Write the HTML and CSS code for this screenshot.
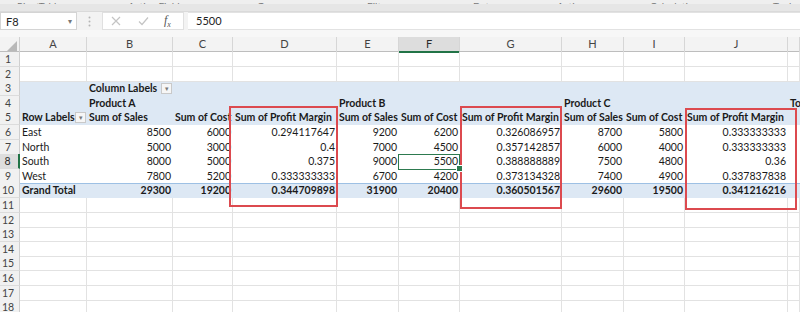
FILE: index.html
```html
<!DOCTYPE html>
<html lang="en">
<head>
    <meta charset="UTF-8">
    <title>PivotTable - Profit Margin</title>
    <link rel="stylesheet" href="styles.css">
</head>
<body>
    <div class="ribbon-foot">
        <span>PivotTable</span>
        <span>Active Field</span>
        <span>Group</span>
        <span>Filter</span>
        <span>Data</span>
        <span>Actions</span>
        <span>Calculations</span>
        <span>Tools</span>
    </div>
    <div class="ribbon-edge"></div>

    <div class="fbar">
        <div class="namebox">
            <span>F8</span>
            <span class="nb-arrow">&#9662;</span>
        </div>
        <div class="fsep">
            <svg width="3" height="11" viewBox="0 0 3 11"><circle cx="1.5" cy="1.5" r="1" fill="#b5b5b5"/><circle cx="1.5" cy="5.5" r="1" fill="#b5b5b5"/><circle cx="1.5" cy="9.5" r="1" fill="#b5b5b5"/></svg>
        </div>
        <div class="fbtns">
            <svg class="ic" width="10" height="10" viewBox="0 0 10 10"><path d="M1 1 L9 9 M9 1 L1 9" stroke="#c4c4c4" stroke-width="1.2" fill="none"/></svg>
            <svg class="ic" width="11" height="10" viewBox="0 0 11 10"><path d="M1 5.5 L4 8.5 L10 1.5" stroke="#c4c4c4" stroke-width="1.2" fill="none"/></svg>
            <span class="fx"><i>f</i><sub>x</sub></span>
        </div>
        <div class="finput">5500</div>
    </div>
    <div class="fgap"></div>

    <div class="sheet">
        <div class="row colhead">
            <div class="corner"></div>
            <div class="ch">A</div><div class="ch">B</div><div class="ch">C</div><div class="ch">D</div><div class="ch">E</div>
            <div class="ch on">F</div><div class="ch">G</div><div class="ch">H</div><div class="ch">I</div><div class="ch">J</div><div class="ch"></div>
        </div>

        <div class="row grid">
            <div class="rh">1</div>
            <div class="c"></div><div class="c"></div><div class="c"></div><div class="c"></div><div class="c"></div>
            <div class="c"></div><div class="c"></div><div class="c"></div><div class="c"></div><div class="c"></div><div class="c"></div>
        </div>
        <div class="row grid s">
            <div class="rh">2</div>
            <div class="c"></div><div class="c"></div><div class="c"></div><div class="c"></div><div class="c"></div>
            <div class="c"></div><div class="c"></div><div class="c"></div><div class="c"></div><div class="c"></div><div class="c"></div>
        </div>

        <div class="row pv">
            <div class="rh">3</div>
            <div class="c"></div>
            <div class="c b dd"><span>Column Labels</span><span class="ddbtn">&#9662;</span></div>
            <div class="c"></div><div class="c"></div><div class="c"></div><div class="c"></div>
            <div class="c"></div><div class="c"></div><div class="c"></div><div class="c"></div><div class="c"></div>
        </div>
        <div class="row pv s">
            <div class="rh">4</div>
            <div class="c"></div>
            <div class="c b">Product A</div>
            <div class="c"></div><div class="c"></div>
            <div class="c b">Product B</div>
            <div class="c"></div><div class="c"></div>
            <div class="c b">Product C</div>
            <div class="c"></div><div class="c"></div>
            <div class="c b">Total Sum of Sales</div>
        </div>
        <div class="row pv">
            <div class="rh">5</div>
            <div class="c b dd"><span>Row Labels</span><span class="ddbtn">&#9662;</span></div>
            <div class="c b">Sum of Sales</div>
            <div class="c b">Sum of Cost</div>
            <div class="c b">Sum of Profit Margin</div>
            <div class="c b">Sum of Sales</div>
            <div class="c b">Sum of Cost</div>
            <div class="c b">Sum of Profit Margin</div>
            <div class="c b">Sum of Sales</div>
            <div class="c b">Sum of Cost</div>
            <div class="c b">Sum of Profit Margin</div>
            <div class="c"></div>
        </div>

        <div class="row data">
            <div class="rh">6</div>
            <div class="c">East</div>
            <div class="c n">8500</div><div class="c n">6000</div><div class="c n">0.294117647</div>
            <div class="c n">9200</div><div class="c n">6200</div><div class="c n">0.326086957</div>
            <div class="c n">8700</div><div class="c n">5800</div><div class="c n">0.333333333</div>
            <div class="c"></div>
        </div>
        <div class="row data s">
            <div class="rh">7</div>
            <div class="c">North</div>
            <div class="c n">5000</div><div class="c n">3000</div><div class="c n">0.4</div>
            <div class="c n">7000</div><div class="c n">4500</div><div class="c n">0.357142857</div>
            <div class="c n">6000</div><div class="c n">4000</div><div class="c n">0.333333333</div>
            <div class="c"></div>
        </div>
        <div class="row data">
            <div class="rh on">8</div>
            <div class="c">South</div>
            <div class="c n">8000</div><div class="c n">5000</div><div class="c n">0.375</div>
            <div class="c n">9000</div><div class="c n sel">5500</div><div class="c n">0.388888889</div>
            <div class="c n">7500</div><div class="c n">4800</div><div class="c n">0.36</div>
            <div class="c"></div>
        </div>
        <div class="row data s">
            <div class="rh">9</div>
            <div class="c">West</div>
            <div class="c n">7800</div><div class="c n">5200</div><div class="c n">0.333333333</div>
            <div class="c n">6700</div><div class="c n">4200</div><div class="c n">0.373134328</div>
            <div class="c n">7400</div><div class="c n">4900</div><div class="c n">0.337837838</div>
            <div class="c"></div>
        </div>
        <div class="row pv total">
            <div class="rh">10</div>
            <div class="c b">Grand Total</div>
            <div class="c n b">29300</div><div class="c n b">19200</div><div class="c n b">0.344709898</div>
            <div class="c n b">31900</div><div class="c n b">20400</div><div class="c n b">0.360501567</div>
            <div class="c n b">29600</div><div class="c n b">19500</div><div class="c n b">0.341216216</div>
            <div class="c"></div>
        </div>

        <div class="row grid">
            <div class="rh">11</div>
            <div class="c"></div><div class="c"></div><div class="c"></div><div class="c"></div><div class="c"></div>
            <div class="c"></div><div class="c"></div><div class="c"></div><div class="c"></div><div class="c"></div><div class="c"></div>
        </div>
        <div class="row grid s">
            <div class="rh">12</div>
            <div class="c"></div><div class="c"></div><div class="c"></div><div class="c"></div><div class="c"></div>
            <div class="c"></div><div class="c"></div><div class="c"></div><div class="c"></div><div class="c"></div><div class="c"></div>
        </div>
        <div class="row grid">
            <div class="rh">13</div>
            <div class="c"></div><div class="c"></div><div class="c"></div><div class="c"></div><div class="c"></div>
            <div class="c"></div><div class="c"></div><div class="c"></div><div class="c"></div><div class="c"></div><div class="c"></div>
        </div>
        <div class="row grid s">
            <div class="rh">14</div>
            <div class="c"></div><div class="c"></div><div class="c"></div><div class="c"></div><div class="c"></div>
            <div class="c"></div><div class="c"></div><div class="c"></div><div class="c"></div><div class="c"></div><div class="c"></div>
        </div>
        <div class="row grid">
            <div class="rh">15</div>
            <div class="c"></div><div class="c"></div><div class="c"></div><div class="c"></div><div class="c"></div>
            <div class="c"></div><div class="c"></div><div class="c"></div><div class="c"></div><div class="c"></div><div class="c"></div>
        </div>
        <div class="row grid">
            <div class="rh">16</div>
            <div class="c"></div><div class="c"></div><div class="c"></div><div class="c"></div><div class="c"></div>
            <div class="c"></div><div class="c"></div><div class="c"></div><div class="c"></div><div class="c"></div><div class="c"></div>
        </div>
        <div class="row grid s">
            <div class="rh">17</div>
            <div class="c"></div><div class="c"></div><div class="c"></div><div class="c"></div><div class="c"></div>
            <div class="c"></div><div class="c"></div><div class="c"></div><div class="c"></div><div class="c"></div><div class="c"></div>
        </div>
        <div class="row grid">
            <div class="rh">18</div>
            <div class="c"></div><div class="c"></div><div class="c"></div><div class="c"></div><div class="c"></div>
            <div class="c"></div><div class="c"></div><div class="c"></div><div class="c"></div><div class="c"></div><div class="c"></div>
        </div>

        <!-- annotation boxes drawn over the profit margin columns -->
        <div class="mark m1"></div>
        <div class="mark m2"></div>
        <div class="mark m3"></div>
    </div>
</body>
</html>
```

FILE: styles.css
```css
* {
    box-sizing: border-box;
}

body {
    margin: 0;
    height: 312px;
    overflow: hidden;
    background: #ffffff;
    font-family: Lato, "Liberation Sans", sans-serif;
    font-size: 11px;
    color: #1a1a1a;
}

/* bottom edge of the ribbon, group names cut off */
.ribbon-foot {
    height: 4px;
    overflow: hidden;
    background: #efefef;
    display: grid;
    grid-template-columns: 111px 129px 110px 106px 84px 93px 123px auto;
    align-items: end;
    padding-left: 17px;
    font-size: 10px;
    color: #7a7a7a;
    line-height: 12px;
}

.ribbon-edge {
    height: 8px;
    background: #e6e6e6;
    border-bottom: 1px solid #dadada;
}

/* formula bar */
.fbar {
    height: 18px;
    display: flex;
    background: #f3f3f3;
}

.namebox {
    width: 77px;
    background: #fff;
    border: 1px solid #d4d4d4;
    display: flex;
    justify-content: space-between;
    align-items: center;
    padding: 0 4px 0 5px;
    font-size: 11px;
    color: #222;
}

.nb-arrow {
    font-size: 8px;
    color: #777;
}

.fsep {
    width: 25px;
    display: flex;
    align-items: center;
    justify-content: center;
}

.fbtns {
    width: 82px;
    background: #fff;
    border: 1px solid #e0e0e0;
    display: flex;
    align-items: center;
    padding-left: 8px;
    gap: 17px;
}

.fx {
    font-family: "Liberation Serif", serif;
    font-size: 12px;
    color: #555;
    margin-left: -2px;
}

.fx sub {
    font-size: 8px;
    font-style: italic;
}

.finput {
    flex: 1;
    margin-left: 4px;
    background: #fff;
    border-top: 1px solid #e2e2e2;
    border-bottom: 1px solid #e2e2e2;
    padding-left: 8px;
    line-height: 16px;
    font-size: 11px;
    color: #222;
}

.fgap {
    height: 7px;
    background: #f7f7f7;
}

/* sheet */
.sheet {
    position: relative;
    overflow: hidden;
}

.row {
    display: grid;
    grid-template-columns: 20px 67px 86px 60px 104px 62px 61px 102px 62px 61px 103px 12px;
    height: 15px;
}

.row.s {
    height: 14px;
}

.colhead {
    background: #f3f3f3;
    border-bottom: 1px solid #bdbdbd;
}

.corner {
    border-right: 1px solid #d0d0d0;
    position: relative;
}

.corner::after {
    content: "";
    position: absolute;
    right: 2px;
    bottom: 2px;
    border-left: 10px solid transparent;
    border-bottom: 10px solid #b9b9b9;
}

.ch {
    border-right: 1px solid #d6d6d6;
    text-align: center;
    line-height: 14px;
    color: #444;
    font-size: 11px;
}

.ch.on {
    background: #dddddd;
    border-bottom: 2px solid #217346;
    color: #2b2b2b;
}

.rh {
    background: #f1f1f1;
    border-right: 1px solid #cfcfcf;
    border-bottom: 1px solid #dcdcdc;
    text-align: center;
    padding-right: 3px;
    color: #444;
    font-size: 10.5px;
    line-height: 14px;
}

.rh.on {
    background: #dddddd;
    border-right: 2px solid #217346;
    color: #2b2b2b;
}

.c {
    padding: 0 2px;
    white-space: nowrap;
    line-height: 15px;
    font-size: 10.5px;
}

.row.s .c {
    line-height: 14px;
}

.grid .c {
    border-right: 1px solid #e2e2e2;
    border-bottom: 1px solid #e2e2e2;
}

.n {
    text-align: right;
}

.b {
    font-weight: bold;
}

/* pivot table styling */
.pv {
    background: #dde8f4;
}

.total {
    box-shadow: inset 0 1px 0 #9dc0e4;
}

.dd {
    display: flex;
    justify-content: space-between;
    align-items: center;
    padding-right: 1px;
}

.ddbtn {
    width: 11px;
    height: 11px;
    border: 1px solid #c9c9c9;
    background: #f6f6f6;
    font-size: 7px;
    line-height: 9px;
    text-align: center;
    color: #7a7a7a;
    font-weight: normal;
}

.sel {
    position: relative;
}

.sel::after {
    content: "";
    position: absolute;
    left: -1px;
    top: 0;
    right: 0;
    bottom: -1px;
    border: 1px solid #2d7a4f;
}

.sel::before {
    content: "";
    position: absolute;
    right: -3px;
    bottom: -3px;
    width: 5px;
    height: 5px;
    background: #2d7a4f;
    border: 1px solid #fff;
    z-index: 1;
}

/* red annotation boxes */
.mark {
    position: absolute;
    border: 2px solid #dc4a4f;
}

.m1 {
    left: 229px;
    top: 69px;
    width: 109px;
    height: 101px;
}

.m2 {
    left: 460px;
    top: 69px;
    width: 102px;
    height: 103px;
}

.m3 {
    left: 685px;
    top: 71px;
    width: 112px;
    height: 102px;
}
```
